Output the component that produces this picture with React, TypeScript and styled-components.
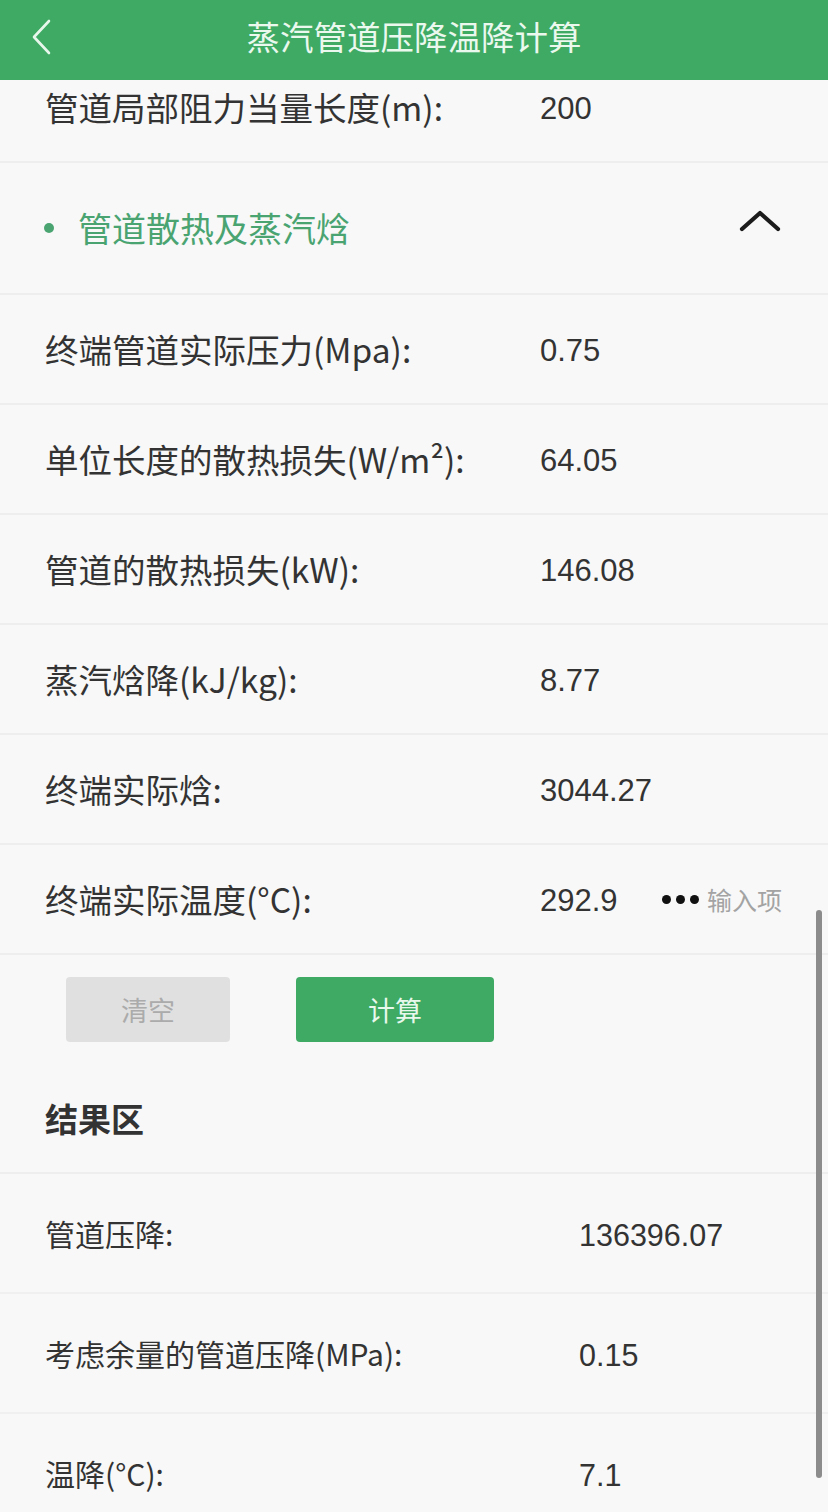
import React from 'react';
import styled, { createGlobalStyle } from 'styled-components';

type Field = { label: React.ReactNode; value: string; hint?: boolean };

const inputs: Field[] = [
  { label: '终端管道实际压力(Mpa):', value: '0.75' },
  { label: '单位长度的散热损失(W/m²):', value: '64.05' },
  { label: '管道的散热损失(kW):', value: '146.08' },
  { label: '蒸汽焓降(kJ/kg):', value: '8.77' },
  { label: '终端实际焓:', value: '3044.27' },
  { label: '终端实际温度(°C):', value: '292.9', hint: true },
];

const results: Field[] = [
  { label: '管道压降:', value: '136396.07' },
  { label: '考虑余量的管道压降(MPa):', value: '0.15' },
  { label: '温降(°C):', value: '7.1' },
];

const App: React.FC = () => {
  return (
    <>
      <GlobalStyle />
      <Page>
        <Header>
          <BackButton aria-label="back">
            <svg width="24" height="36" viewBox="0 0 24 36" fill="none">
              <path d="M19 2 L4 18 L19 34" stroke="#e8f7ec" strokeWidth="2.6" strokeLinecap="round" strokeLinejoin="round" />
            </svg>
          </BackButton>
          <Title>蒸汽管道压降温降计算</Title>
        </Header>

        <Scroller>
          <Content>
            <Row>
              <Label>管道局部阻力当量长度(m):</Label>
              <Value>200</Value>
            </Row>

            <SectionHeader>
              <Dot />
              <SectionTitle>管道散热及蒸汽焓</SectionTitle>
              <Chevron width="44" height="26" viewBox="0 0 44 26" fill="none">
                <path d="M4 21 L22 5 L40 21" stroke="#1c1c1c" strokeWidth="4.2" strokeLinecap="round" strokeLinejoin="round" />
              </Chevron>
            </SectionHeader>

            {inputs.map((f) => (
              <Row key={f.value}>
                <Label>{f.label}</Label>
                <Value>{f.value}</Value>
                {f.hint && (
                  <Hint>
                    <Dots>
                      <i />
                      <i />
                      <i />
                    </Dots>
                    输入项
                  </Hint>
                )}
              </Row>
            ))}

            <Actions>
              <ClearButton>清空</ClearButton>
              <CalcButton>计算</CalcButton>
            </Actions>

            <ResultHeading>结果区</ResultHeading>

            {results.map((f) => (
              <ResultRow key={f.value}>
                <ResultLabel>{f.label}</ResultLabel>
                <ResultValue>{f.value}</ResultValue>
              </ResultRow>
            ))}
          </Content>
          <ScrollThumb />
        </Scroller>
      </Page>
    </>
  );
};

export default App;

const GlobalStyle = createGlobalStyle`
  html, body {
    margin: 0;
    padding: 0;
    background: #f8f8f8;
  }
  * {
    box-sizing: border-box;
  }
`;

const Page = styled.div`
  width: 828px;
  height: 1512px;
  display: flex;
  flex-direction: column;
  background: #f8f8f8;
  font-family: 'Noto Sans CJK SC', 'Noto Sans', sans-serif;
  color: #333;
  overflow: hidden;
`;

const Header = styled.header`
  position: relative;
  flex: 0 0 80px;
  display: flex;
  align-items: center;
  justify-content: center;
  background: #3eaa64;
  z-index: 1;
`;

const BackButton = styled.button`
  position: absolute;
  left: 30px;
  top: 19px;
  padding: 0;
  border: none;
  background: none;
  display: flex;
`;

const Title = styled.h1`
  margin: 0 0 8px;
  font-size: 33.5px;
  font-weight: 400;
  color: #eaf8ee;
  line-height: 1;
`;

const Scroller = styled.div`
  position: relative;
  flex: 1;
  overflow: hidden;
`;

const Content = styled.div`
  margin-top: -27px;
  display: flex;
  flex-direction: column;
`;

const Row = styled.div`
  height: 110px;
  display: flex;
  align-items: center;
  padding-left: 45px;
  border-bottom: 2px solid #eeeeee;
`;

const Label = styled.div`
  width: 495px;
  font-size: 33.5px;
  line-height: 1;
  white-space: nowrap;
  color: #333;
`;

const Value = styled.div`
  padding-top: 4px;
  font-family: 'Liberation Sans', Arial, sans-serif;
  font-size: 31px;
  color: #333;
`;

const Hint = styled.div`
  margin-left: auto;
  margin-right: 46px;
  display: flex;
  align-items: center;
  gap: 8px;
  font-size: 25px;
  color: #a3a3a3;
`;

const Dots = styled.span`
  display: flex;
  gap: 5px;

  i {
    width: 9px;
    height: 9px;
    border-radius: 50%;
    background: #111;
  }
`;

const SectionHeader = styled.div`
  height: 132px;
  display: flex;
  align-items: center;
  padding: 0 46px 0 44px;
  border-bottom: 2px solid #eeeeee;
`;

const Dot = styled.span`
  width: 10px;
  height: 10px;
  border-radius: 50%;
  background: #4aa471;
`;

const SectionTitle = styled.div`
  margin-left: 24px;
  font-size: 34px;
  color: #4aa471;
  line-height: 1;
`;

const Chevron = styled.svg`
  margin-left: auto;
  margin-top: -14px;
`;

const Actions = styled.div`
  display: flex;
  gap: 66px;
  padding: 22px 0 0 66px;
`;

const BaseButton = styled.button`
  height: 65px;
  border: none;
  border-radius: 4px;
  font-family: 'Noto Sans CJK SC', sans-serif;
  font-size: 27px;
`;

const ClearButton = styled(BaseButton)`
  width: 164px;
  background: #e0e0e0;
  color: #ababab;
`;

const CalcButton = styled(BaseButton)`
  width: 198px;
  background: #3eaa64;
  color: #e8f8ec;
`;

const ResultHeading = styled.h2`
  margin: 0;
  height: 132px;
  display: flex;
  align-items: center;
  padding: 22px 0 0 45px;
  font-size: 33px;
  font-weight: 700;
  color: #333;
  border-bottom: 2px solid #eeeeee;
`;

const ResultRow = styled.div`
  height: 120px;
  display: flex;
  align-items: center;
  padding-left: 45px;
  border-bottom: 2px solid #f0f0f0;
`;

const ResultLabel = styled.div`
  width: 534px;
  font-size: 30px;
  white-space: nowrap;
  color: #333;
`;

const ResultValue = styled.div`
  padding-top: 4px;
  font-family: 'Liberation Sans', Arial, sans-serif;
  font-size: 30.5px;
  color: #333;
`;

const ScrollThumb = styled.div`
  position: absolute;
  right: 6px;
  top: 830px;
  width: 6px;
  height: 568px;
  border-radius: 3px;
  background: #8c8c8c;
`;
